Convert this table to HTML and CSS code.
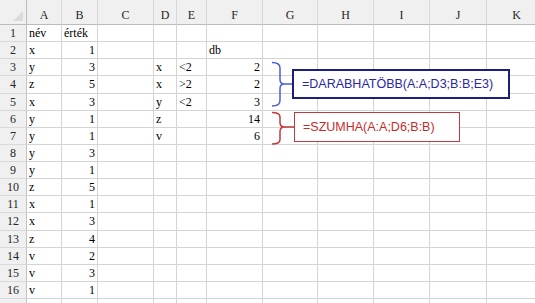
FILE: index.html
```html
<!DOCTYPE html>
<html lang="hu">
<head>
<meta charset="utf-8">
<title>DARABHATÖBB</title>
<link rel="stylesheet" href="styles.css">
</head>
<body>
<div class="sheet">
  <div class="r h"><b class="corner"></b><b>A</b><b>B</b><b>C</b><b>D</b><b>E</b><b>F</b><b>G</b><b>H</b><b>I</b><b>J</b><b>K</b></div>
  <div class="r"><b>1</b><span>név</span><span>érték</span><span></span><span></span><span></span><span></span><span></span><span></span><span></span><span></span><span></span></div>
  <div class="r"><b>2</b><span>x</span><span class="n">1</span><span></span><span></span><span></span><span>db</span><span></span><span></span><span></span><span></span><span></span></div>
  <div class="r"><b>3</b><span>y</span><span class="n">3</span><span></span><span>x</span><span>&lt;2</span><span class="n">2</span><span></span><span></span><span></span><span></span><span></span></div>
  <div class="r"><b>4</b><span>z</span><span class="n">5</span><span></span><span>x</span><span>&gt;2</span><span class="n">2</span><span></span><span></span><span></span><span></span><span></span></div>
  <div class="r"><b>5</b><span>x</span><span class="n">3</span><span></span><span>y</span><span>&lt;2</span><span class="n">3</span><span></span><span></span><span></span><span></span><span></span></div>
  <div class="r"><b>6</b><span>y</span><span class="n">1</span><span></span><span>z</span><span></span><span class="n">14</span><span></span><span></span><span></span><span></span><span></span></div>
  <div class="r"><b>7</b><span>y</span><span class="n">1</span><span></span><span>v</span><span></span><span class="n">6</span><span></span><span></span><span></span><span></span><span></span></div>
  <div class="r"><b>8</b><span>y</span><span class="n">3</span><span></span><span></span><span></span><span></span><span></span><span></span><span></span><span></span><span></span></div>
  <div class="r"><b>9</b><span>y</span><span class="n">1</span><span></span><span></span><span></span><span></span><span></span><span></span><span></span><span></span><span></span></div>
  <div class="r"><b>10</b><span>z</span><span class="n">5</span><span></span><span></span><span></span><span></span><span></span><span></span><span></span><span></span><span></span></div>
  <div class="r"><b>11</b><span>x</span><span class="n">1</span><span></span><span></span><span></span><span></span><span></span><span></span><span></span><span></span><span></span></div>
  <div class="r"><b>12</b><span>x</span><span class="n">3</span><span></span><span></span><span></span><span></span><span></span><span></span><span></span><span></span><span></span></div>
  <div class="r"><b>13</b><span>z</span><span class="n">4</span><span></span><span></span><span></span><span></span><span></span><span></span><span></span><span></span><span></span></div>
  <div class="r"><b>14</b><span>v</span><span class="n">2</span><span></span><span></span><span></span><span></span><span></span><span></span><span></span><span></span><span></span></div>
  <div class="r"><b>15</b><span>v</span><span class="n">3</span><span></span><span></span><span></span><span></span><span></span><span></span><span></span><span></span><span></span></div>
  <div class="r"><b>16</b><span>v</span><span class="n">1</span><span></span><span></span><span></span><span></span><span></span><span></span><span></span><span></span><span></span></div>
  <div class="r"><b>17</b><span></span><span></span><span></span><span></span><span></span><span></span><span></span><span></span><span></span><span></span><span></span></div>

  <svg class="braces" width="535" height="303" viewBox="0 0 535 303">
    <path d="M272 62.5 Q280 62.5 280 68 L280 79.5 Q280 84 284.5 84 Q280 84 280 88.5 L280 100.5 Q280 106 272 106 M284.5 84 H292" fill="none" stroke="#4b5fd3" stroke-width="1.5"/>
    <path d="M272 112.5 Q280 112.5 280 117 L280 122.5 Q280 127 284.5 127 Q280 127 280 131.5 L280 139.5 Q280 144 272 144 M284.5 127 H294" fill="none" stroke="#c3393c" stroke-width="1.5"/>
  </svg>
  <div class="callout blue">=DARABHATÖBB(A:A;D3;B:B;E3)</div>
  <div class="callout red">=SZUMHA(A:A;D6;B:B)</div>
</div>
</body>
</html>
```
FILE: styles.css
```css
html, body {
  margin: 0;
  background: #fff;
}
body {
  font-family: "Liberation Serif", "Times New Roman", serif;
  font-size: 12px;
  color: #000;
}
.sheet {
  position: relative;
  width: 535px;
  height: 303px;
  overflow: hidden;
}
.r {
  display: grid;
  grid-template-columns: 27px 35px 36px 56px 23px 30px 56px 55px 56px 56px 57px 60px;
  height: 17.125px;
}
.r > * {
  box-sizing: border-box;
  border-right: 1px solid #d4d4d4;
  border-bottom: 1px solid #d4d4d4;
  line-height: 16px;
  padding: 0 2px;
  white-space: nowrap;
  overflow: hidden;
}
.r > b {
  font-weight: normal;
  background: #f0f0f0;
  color: #262626;
  text-align: center;
  border-right-color: #c3c3c3;
  border-bottom-color: #d9d9d9;
  padding: 0;
}
.r > .n {
  text-align: right;
}
.r.h {
  height: 25px;
}
.r.h > b {
  padding-top: 7px;
  border-right-color: #d9d9d9;
  border-bottom-color: #bcbcbc;
}
.r.h > .corner {
  position: relative;
  border-right-color: #bcbcbc;
}
.r.h > .corner::after {
  content: "";
  position: absolute;
  right: 3px;
  bottom: 3px;
  border-style: solid;
  border-width: 0 0 10px 10px;
  border-color: transparent transparent #dadada transparent;
}
.braces {
  position: absolute;
  left: 0;
  top: 0;
}
.callout {
  position: absolute;
  box-sizing: border-box;
  display: flex;
  align-items: center;
  background: #fff;
  font-family: "Liberation Sans", Arial, sans-serif;
  font-size: 12.5px;
  white-space: nowrap;
  height: 30px;
}
.blue {
  left: 292px;
  top: 69px;
  width: 218px;
  padding-left: 8px;
  border: 2px solid #1d1d7e;
  color: #2828a4;
}
.red {
  left: 294px;
  top: 112px;
  width: 166px;
  padding-left: 8px;
  border: 1.5px solid #c0393b;
  color: #c42c2c;
}
```
